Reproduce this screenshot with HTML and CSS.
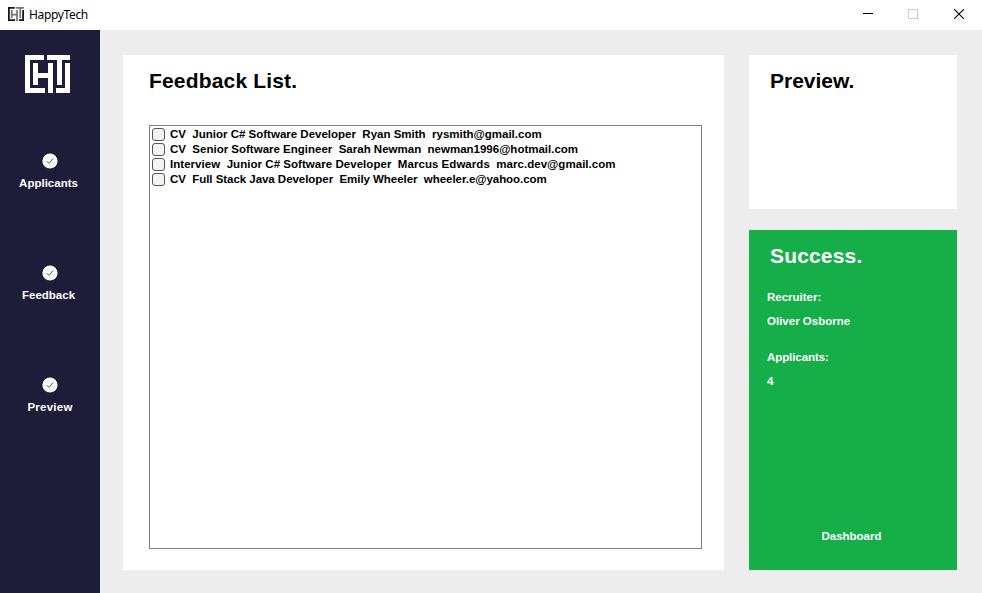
FILE: index.html
```html
<!DOCTYPE html>
<html lang="en">
<head>
<meta charset="utf-8">
<title>HappyTech</title>
<link rel="stylesheet" href="styles.css">
</head>
<body>
<svg class="defs">
  <symbol id="check" viewBox="0 0 16 16">
    <circle cx="8" cy="8" r="7.6" fill="#fff"/>
    <path d="M4.8 8.2L7 10.4L11.2 5.4" fill="none" stroke="#55546b" stroke-width="1"/>
  </symbol>
</svg>
<header class="titlebar">
  <svg class="app-icon" viewBox="0 0 45 38" preserveAspectRatio="none">
    <path fill="#17171b" d="M0 0H19V5H5V33H20V38H0ZM40 8H45V38H31V33H40Z"/>
    <path fill="#777488" d="M8 8H13V18H23V8H28V38H23V23H13V30H8ZM22 0H45V5H37V30H32V5H22Z"/>
  </svg>
  <span class="app-name">HappyTech</span>
  <div class="controls">
    <svg width="10" height="10"><path d="M0 4.5H10" stroke="#000"/></svg>
    <svg width="10" height="10"><rect x=".5" y=".5" width="9" height="9" fill="none" stroke="#ccc"/></svg>
    <svg width="10" height="10"><path d="M0 0L10 10M10 0L0 10" stroke="#000" stroke-width="1.1"/></svg>
  </div>
</header>
<div class="body">
  <nav class="sidebar">
    <svg class="logo" viewBox="0 0 45 38"><path fill="#fff" d="M0 0H19V5H5V33H20V38H0ZM8 8H13V18H23V8H28V38H23V23H13V30H8ZM22 0H45V5H37V30H32V5H22ZM40 8H45V38H31V33H40Z"/></svg>
    <a class="nav-item"><svg class="check"><use href="#check"/></svg><span>Applicants</span></a>
    <a class="nav-item"><svg class="check"><use href="#check"/></svg><span>Feedback</span></a>
    <a class="nav-item nav-preview"><svg class="check"><use href="#check"/></svg><span>Preview</span></a>
  </nav>
  <main class="feedback">
    <h1>Feedback List.</h1>
    <div class="list">
      <div class="row"><i class="box"></i><span class="r1">CV  Junior C# Software Developer  Ryan Smith  rysmith@gmail.com</span></div>
      <div class="row"><i class="box"></i><span class="r2">CV  Senior Software Engineer  Sarah Newman  newman1996@hotmail.com</span></div>
      <div class="row"><i class="box"></i><span class="r3">Interview  Junior C# Software Developer  Marcus Edwards  marc.dev@gmail.com</span></div>
      <div class="row"><i class="box"></i><span class="r4">CV  Full Stack Java Developer  Emily Wheeler  wheeler.e@yahoo.com</span></div>
    </div>
  </main>
  <aside class="side">
    <section class="preview"><h1>Preview.</h1></section>
    <section class="success">
      <h1>Success.</h1>
      <dl>
        <dt>Recruiter:</dt><dd>Oliver Osborne</dd>
        <dt class="applicants">Applicants:</dt><dd>4</dd>
      </dl>
      <a class="dashboard">Dashboard</a>
    </section>
  </aside>
</div>
</body>
</html>
```
FILE: styles.css
```css
* { box-sizing: border-box; margin: 0; padding: 0; }
body { width: 982px; height: 593px; overflow: hidden; background: #ededed; font: bold 11.5px/15px "Liberation Sans", Arial, sans-serif; color: #000; display: flex; flex-direction: column; }
.defs { display: none; }
.titlebar { height: 30px; background: #fff; display: flex; align-items: center; padding: 0 18px 0 8px; }
.app-icon { width: 16px; height: 14px; margin-right: 5px; margin-top: -2px; }
.app-name { font: 12px/16px "Noto Sans", sans-serif; letter-spacing: -.35px; }
.controls { margin-left: auto; display: flex; gap: 35px; margin-top: -2px; }
.controls svg { display: block; }
.controls svg:last-child { margin-left: 1px; }
.body { flex: 1; display: flex; }
.sidebar { width: 100px; background: #1e1d39; color: #fff; display: flex; flex-direction: column; padding-top: 25px; }
.logo { width: 45px; height: 38px; margin: 0 0 60px 25px; }
.nav-item { height: 112px; display: flex; flex-direction: column; align-items: center; gap: 7px; }
.nav-item span { margin-right: 3px; }
.nav-preview { letter-spacing: .25px; }
.nav-preview span { margin-right: 0; }
.check { width: 16px; height: 16px; }
h1 { font-size: 21px; line-height: 26px; letter-spacing: .17px; }
.feedback { width: 601px; height: 515px; margin: 25px 25px 0 23px; background: #fff; padding: 13px 22px 21px 26px; display: flex; flex-direction: column; }
.list { flex: 1; margin-top: 31px; border: 1px solid #828087; padding-top: 1px; }
.row { height: 15px; display: flex; align-items: center; white-space: pre; }
.r3 { letter-spacing: .04px; }
.r4 { letter-spacing: -.04px; }
.box { width: 13px; height: 13px; margin: 0 5px 0 2px; border: 1px solid #555; border-radius: 3px; background: #f3f3f3; }
.side { width: 208px; padding-top: 25px; display: flex; flex-direction: column; gap: 21px; }
.preview, .success { padding: 13px 18px 0; background: #fff; height: 154px; }
.side h1 { margin-left: 3px; }
.preview h1 { letter-spacing: 0; }
.success { height: 340px; background: #15ae48; color: #fff; display: flex; flex-direction: column; padding-bottom: 26px; }
dl { margin-top: 16px; }
dt, dd { line-height: 24px; }
dd { margin-bottom: 12px; }
.applicants { letter-spacing: -.08px; }
.dashboard { margin-top: auto; text-align: center; margin-left: -3px; }
```
